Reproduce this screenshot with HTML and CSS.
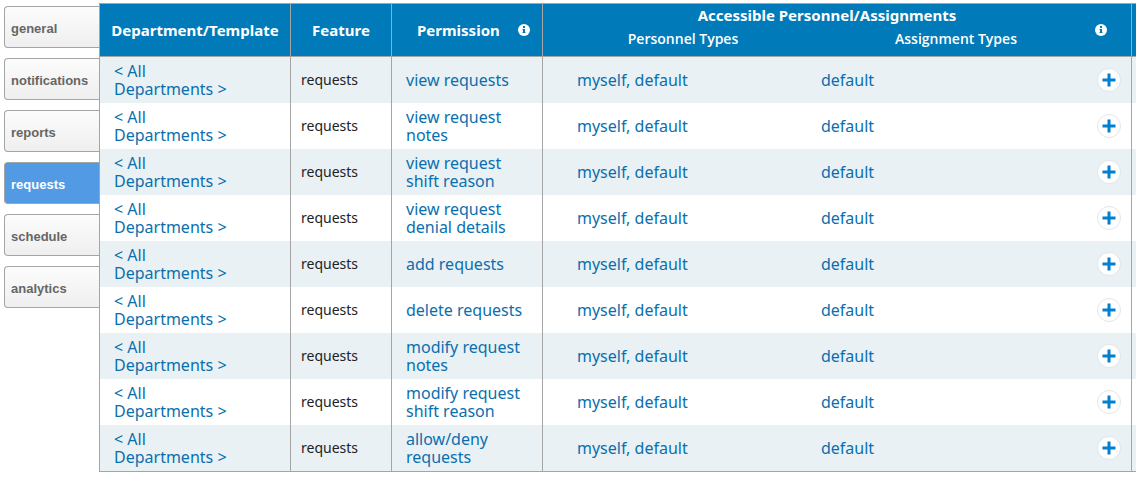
FILE: index.html
```html
<!DOCTYPE html>
<html lang="en">
<head>
  <meta charset="UTF-8">
  <meta name="viewport" content="width=device-width, initial-scale=1">
  <title>Permissions - requests</title>
  <link rel="stylesheet" href="styles.css">
</head>
<body>

<!-- icons used by the table -->
<svg class="sprite" aria-hidden="true">
  <symbol id="info" viewBox="0 0 12 12">
    <circle cx="6" cy="6" r="6" fill="#fff"/>
    <path fill="#007ab9" d="M5 2h2v2H5zM5 5h2v4H5z"/>
    <path fill="#007ab9" opacity=".5" d="M4 5h1v1H4zM4 8h1v1H4zM7 8h1v1H7z"/>
  </symbol>
  <symbol id="plus" viewBox="0 0 14 14">
    <path d="M7 .5v13M.5 7h13" stroke="#0080d2" stroke-width="3"/>
  </symbol>
</svg>

<div class="layout">
  <nav class="tabs">
    <a href="#general">general</a>
    <a href="#notifications">notifications</a>
    <a href="#reports">reports</a>
    <a href="#requests" class="active">requests</a>
    <a href="#schedule">schedule</a>
    <a href="#analytics">analytics</a>
  </nav>

  <main class="content">
    <table class="permissions">
      <colgroup>
        <col class="col-department">
        <col class="col-feature">
        <col class="col-permission">
        <col class="col-personnel">
        <col>
        <col class="col-action">
        <col class="col-extra">
      </colgroup>
      <thead>
        <tr class="head-top">
          <th rowspan="2">Department/Template</th>
          <th rowspan="2">Feature</th>
          <th rowspan="2">
            <div class="head-permission">
              Permission
              <button type="button" class="info-btn" aria-label="About permissions"><svg><use href="#info"/></svg></button>
            </div>
          </th>
          <th colspan="2" class="head-group">Accessible Personnel/Assignments</th>
          <th rowspan="2" class="head-info">
            <button type="button" class="info-btn" aria-label="About assignments"><svg><use href="#info"/></svg></button>
          </th>
          <th rowspan="2"></th>
        </tr>
        <tr class="head-sub">
          <th class="head-personnel">Personnel Types</th>
          <th class="head-assignment">Assignment Types</th>
        </tr>
      </thead>
      <tbody id="rows"></tbody>
    </table>
  </main>
</div>

<script>
  const permissions = [
    'view requests',
    'view request notes',
    'view request shift reason',
    'view request denial details',
    'add requests',
    'delete requests',
    'modify request notes',
    'modify request shift reason',
    'allow/deny requests'
  ];

  // Render one row for each permission
  document.getElementById('rows').innerHTML = permissions.map(name => `
    <tr>
      <td class="department"><a href="#">&lt; All Departments &gt;</a></td>
      <td class="feature">requests</td>
      <td class="permission"><a href="#">${name}</a></td>
      <td class="personnel"><a href="#">myself, default</a></td>
      <td class="assignment"><a href="#">default</a></td>
      <td class="action"><button type="button" class="add-btn" aria-label="Add to ${name}"><svg><use href="#plus"/></svg></button></td>
      <td></td>
    </tr>
  `).join('');
</script>

</body>
</html>
```

FILE: styles.css
```css
* {
  box-sizing: border-box;
}

body {
  margin: 0;
  background-color: #fff;
  font-family: "Noto Sans", sans-serif;
  font-size: 16px;
  line-height: 18px;
  color: #222;
}

a {
  color: #0a6fae;
  text-decoration: none;
}

button {
  padding: 0;
  border: none;
  cursor: pointer;
}

.sprite {
  position: absolute;
  width: 0;
  height: 0;
}

.layout {
  display: flex;
  padding: 3px 0 6px 4px;
}

/* side tabs */
.tabs {
  display: flex;
  flex-direction: column;
  gap: 10px;
  width: 95px;
  flex-shrink: 0;
  padding-top: 3px;
}

.tabs a {
  padding: 14px 6px 10px;
  border: 1px solid #a5a5a5;
  border-right: none;
  border-radius: 4px 0 0 4px;
  background: linear-gradient(#fcfcfc, #efefef);
  color: #666;
  font-family: "Liberation Sans", Arial, sans-serif;
  font-size: 13px;
  font-weight: bold;
  line-height: 16px;
}

.tabs a.active {
  background: #529ae3;
  color: #fff;
}

/* permissions table */
.content {
  flex: 1;
  min-width: 0;
}

.permissions {
  width: 100%;
  table-layout: fixed;
  border-spacing: 0;
  border-top: 1px solid #a5a5a5;
  border-bottom: 1px solid #a5a5a5;
}

.col-department {
  width: 191px;
}

.col-feature {
  width: 101px;
}

.col-permission {
  width: 151px;
}

.col-personnel {
  width: 265px;
}

.col-action {
  width: 48px;
}

.col-extra {
  width: 5px;
}

.permissions th {
  padding: 0;
  background-color: #007ab9;
  border-left: 1px solid #a5a5a5;
  border-bottom: 1px solid #a5a5a5;
  color: #fff;
  font-size: 15px;
}

.permissions td {
  height: 46px;
  padding: 4px 14px;
  border-left: 1px solid #a5a5a5;
}

.permissions tbody tr:nth-child(odd) {
  background-color: #e9f1f5;
}

.permissions .head-group {
  height: 24px;
  padding-left: 28px;
  padding-bottom: 2px;
  border-bottom: none;
}

.permissions .head-sub th {
  height: 29px;
  padding-bottom: 6px;
  font-family: "Open Sans", sans-serif;
  font-size: 14px;
  font-weight: 600;
}

.permissions .head-sub .head-personnel {
  padding-left: 16px;
}

.permissions .head-sub .head-assignment {
  padding-left: 22px;
  border-left: none;
}

.permissions .head-info {
  padding-right: 24px;
  border-left: none;
  text-align: right;
}

.head-permission {
  display: flex;
  align-items: center;
  justify-content: space-between;
  padding: 0 12px 0 25px;
}

.permissions .department {
  padding-right: 50px;
}

.permissions .feature {
  padding-left: 10px;
  font-size: 14px;
}

.permissions .personnel {
  padding-left: 34px;
}

.permissions .assignment {
  border-left: none;
}

.permissions .action {
  padding: 0 10px 0 0;
  border-left: none;
  text-align: right;
}

.info-btn {
  display: block;
  width: 12px;
  height: 12px;
  margin-left: auto;
  background: none;
}

.info-btn svg {
  display: block;
  width: 12px;
  height: 12px;
}

.add-btn {
  width: 24px;
  height: 24px;
  border: 1px solid #e2e5e8;
  border-radius: 50%;
  background-color: #fff;
  vertical-align: middle;
}

.add-btn svg {
  display: block;
  width: 14px;
  height: 14px;
  margin: 0 auto;
}
```
